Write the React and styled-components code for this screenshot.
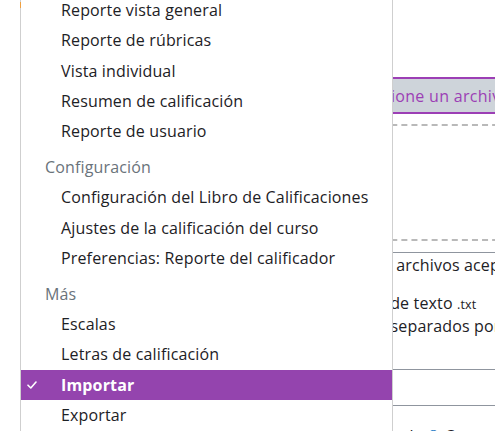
import React from 'react';
import styled, { createGlobalStyle } from 'styled-components';

const GlobalStyle = createGlobalStyle`
  html, body {
    margin: 0;
    padding: 0;
    background: #fff;
    overflow: hidden;
  }
  body {
    font-family: "Open Sans", "Noto Sans", "Liberation Sans", sans-serif;
    font-size: 16px;
    letter-spacing: 0.15px;
    color: #1d2125;
  }
`;

const Page = styled.div`
  position: relative;
  width: 495px;
  height: 431px;
  overflow: hidden;
  background: #fff;
`;

/* page content that sits behind the open menu */
const Content = styled.div`
  margin-left: 240px;
  width: 480px;
  padding-top: 77px;
  display: flex;
  flex-direction: column;
`;

const FileButton = styled.div`
  height: 37px;
  box-sizing: border-box;
  border-top: 2px solid #9c3fb5;
  border-bottom: 2px solid #9c3fb5;
  background: #ced4da;
  color: #9c3fb5;
  display: flex;
  align-items: center;
  padding-left: 103px;
  letter-spacing: 0.3px;
`;

const DropZone = styled.div`
  margin-top: 10px;
  height: 117px;
  box-sizing: border-box;
  border: 2px dashed #b9b9b9;
`;

const Accepted = styled.div`
  margin-top: 11px;
  border-top: 1px solid #8f959e;
  padding-top: 1px;
  display: flex;
  flex-direction: column;
`;

const Line = styled.div`
  height: 22px;
  line-height: 22px;
  padding-left: ${p => p.$indent || 0}px;
  margin-top: ${p => p.$gap || 0}px;
  white-space: nowrap;
`;

const Ext = styled.span`
  font-size: 12.5px;
`;

const SelectBox = styled.div`
  margin-top: 32px;
  height: 37px;
  box-sizing: border-box;
  border-top: 1.5px solid #8f959e;
  border-bottom: 1.5px solid #8f959e;
`;

const FootRow = styled.div`
  margin-top: 19px;
  display: flex;
  align-items: center;
  gap: 4px;
  padding-left: 19px;
  white-space: nowrap;
`;

const InfoIcon = styled.span`
  flex: none;
  width: 13px;
  height: 13px;
  border: 1.5px solid #0f6cbf;
  border-radius: 50%;
  box-sizing: border-box;
`;

/* the open dropdown menu */
const Menu = styled.div`
  position: absolute;
  left: 20px;
  top: -5.2px;
  width: 373px;
  box-sizing: border-box;
  background: #fff;
  border-left: 1px solid #cfcfcf;
  border-right: 1px solid #cfcfcf;
  display: flex;
  flex-direction: column;

  &::before {
    content: '';
    position: absolute;
    left: -1px;
    top: 7px;
    width: 1px;
    height: 6px;
    background: #f0a040;
  }
`;

const Header = styled.div`
  margin-top: 5.2px;
  height: 30.4px;
  line-height: 30.4px;
  padding-left: 24px;
  color: #6a737b;
`;

const Item = styled.div`
  position: relative;
  height: 30.4px;
  line-height: 30.4px;
  padding-left: 40px;
  color: ${p => (p.$active ? '#fff' : '#1d2125')};
  background: ${p => (p.$active ? '#9444ae' : 'transparent')};
  font-weight: ${p => (p.$active ? 700 : 400)};
  white-space: nowrap;
`;

const CheckMark = styled.svg`
  position: absolute;
  left: 6px;
  top: 11px;
`;

const groups = [
  {
    items: [
      'Reporte vista general',
      'Reporte de rúbricas',
      'Vista individual',
      'Resumen de calificación',
      'Reporte de usuario',
    ],
  },
  {
    title: 'Configuración',
    items: [
      'Configuración del Libro de Calificaciones',
      'Ajustes de la calificación del curso',
      'Preferencias: Reporte del calificador',
    ],
  },
  {
    title: 'Más',
    items: ['Escalas', 'Letras de calificación', 'Importar', 'Exportar'],
  },
];

export default function App() {
  return (
    <Page>
      <GlobalStyle />
      <Content>
        <FileButton>Seleccione un archivo...</FileButton>
        <DropZone />
        <Accepted>
          <Line $indent={88}>Tipos de archivos aceptados:</Line>
          <Line $indent={89} $gap={16}>Archivo de texto <Ext>.txt</Ext></Line>
          <Line $indent={90} $gap={1}>Valores separados por comas <Ext>.csv</Ext></Line>
        </Accepted>
        <SelectBox />
        <FootRow>
          Separador de artículo <InfoIcon /> Coma
        </FootRow>
      </Content>

      <Menu>
        {groups.map((g, gi) => (
          <React.Fragment key={gi}>
            {g.title && <Header>{g.title}</Header>}
            {g.items.map(label => (
              <Item key={label} $active={label === 'Importar'}>
                {label === 'Importar' && (
                  <CheckMark width="10" height="8" viewBox="0 0 10 8">
                    <path d="M1 4.2 L3.8 7 L9 1" fill="none" stroke="#fff" strokeWidth="1.6" strokeLinecap="round" strokeLinejoin="round" />
                  </CheckMark>
                )}
                {label}
              </Item>
            ))}
          </React.Fragment>
        ))}
      </Menu>
    </Page>
  );
}
